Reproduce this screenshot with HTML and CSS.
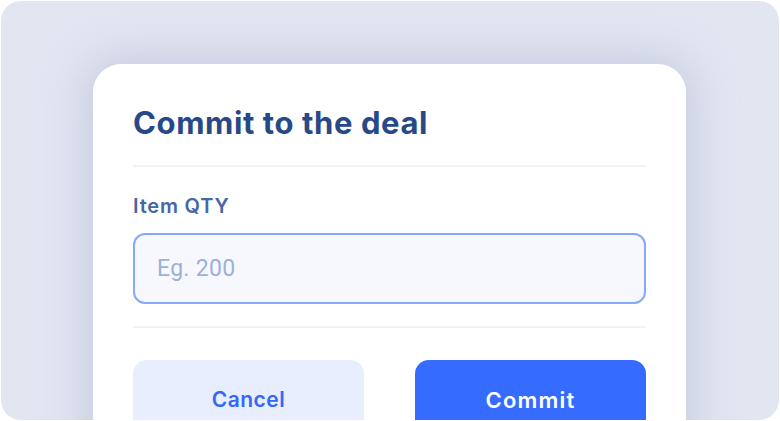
FILE: index.html
```html
<!DOCTYPE html>
<html>
<head>
<meta charset="utf-8">
<link rel="stylesheet" href="styles.css">
</head>
<body>
<div class="stage">
  <div class="modal">
    <h1 class="title">Commit to the deal</h1>
    <div class="divider"></div>
    <label class="label" for="qty">Item QTY</label>
    <input class="input" id="qty" type="text" placeholder="Eg. 200">
    <div class="divider divider-bottom"></div>
    <div class="actions">
      <button class="btn btn-cancel">Cancel</button>
      <button class="btn btn-commit">Commit</button>
    </div>
  </div>
</div>
</body>
</html>
```

FILE: styles.css
```css
html, body {
  margin: 0;
  padding: 0;
  background: #ffffff;
  width: 780px;
  height: 421px;
  overflow: hidden;
}

body {
  padding: 1px 1px 0 1px;
  box-sizing: border-box;
}

.stage {
  width: 778px;
  height: 419px;
  background: #e2e6f1;
  border-radius: 20px;
  padding-top: 63px;
  padding-left: 92px;
  box-sizing: border-box;
  overflow: hidden;
}

.modal {
  width: 593px;
  height: 420px;
  background: #ffffff;
  border-radius: 28px;
  box-shadow: 0 0 40px 10px rgba(170, 180, 210, 0.45);
  padding: 38px 40px 0 40px;
  box-sizing: border-box;
  display: flex;
  flex-direction: column;
  font-family: Inter, "Noto Sans", sans-serif;
}

.title {
  margin: 0;
  font-size: 31px;
  font-weight: 700;
  color: #284987;
  line-height: 42px;
  letter-spacing: 0.6px;
}

.divider {
  height: 2px;
  background: #eff2f9;
  margin-top: 21px;
}

.label {
  margin-top: 27px;
  font-size: 20px;
  font-weight: 600;
  color: #4766a5;
  line-height: 24px;
  letter-spacing: 0.8px;
}

.input {
  margin-top: 15px;
  height: 71px;
  box-sizing: border-box;
  border: 2px solid #86a8f8;
  border-radius: 12px;
  background: #f6f8fe;
  padding: 0 22px;
  font-family: Roboto, "Noto Sans", sans-serif;
  font-size: 23px;
  letter-spacing: 0.3px;
  color: #284987;
  outline: none;
}

.input::placeholder {
  color: #9cb0d8;
}

.divider-bottom {
  margin-top: 22px;
}

.actions {
  margin-top: 32px;
  display: flex;
  gap: 51px;
}

.btn {
  flex: 1;
  height: 80px;
  border: none;
  border-radius: 14px;
  font-family: Inter, "Noto Sans", sans-serif;
  font-weight: 600;
  display: flex;
  align-items: flex-start;
  justify-content: center;
  padding: 27px 0 0 0;
  box-sizing: border-box;
}

.btn-cancel {
  background: #e8eefd;
  color: #3468f4;
  font-size: 21px;
  letter-spacing: 0.5px;
}

.btn-commit {
  background: #356cff;
  color: #ffffff;
  font-size: 22px;
  letter-spacing: 1.2px;
}
```
